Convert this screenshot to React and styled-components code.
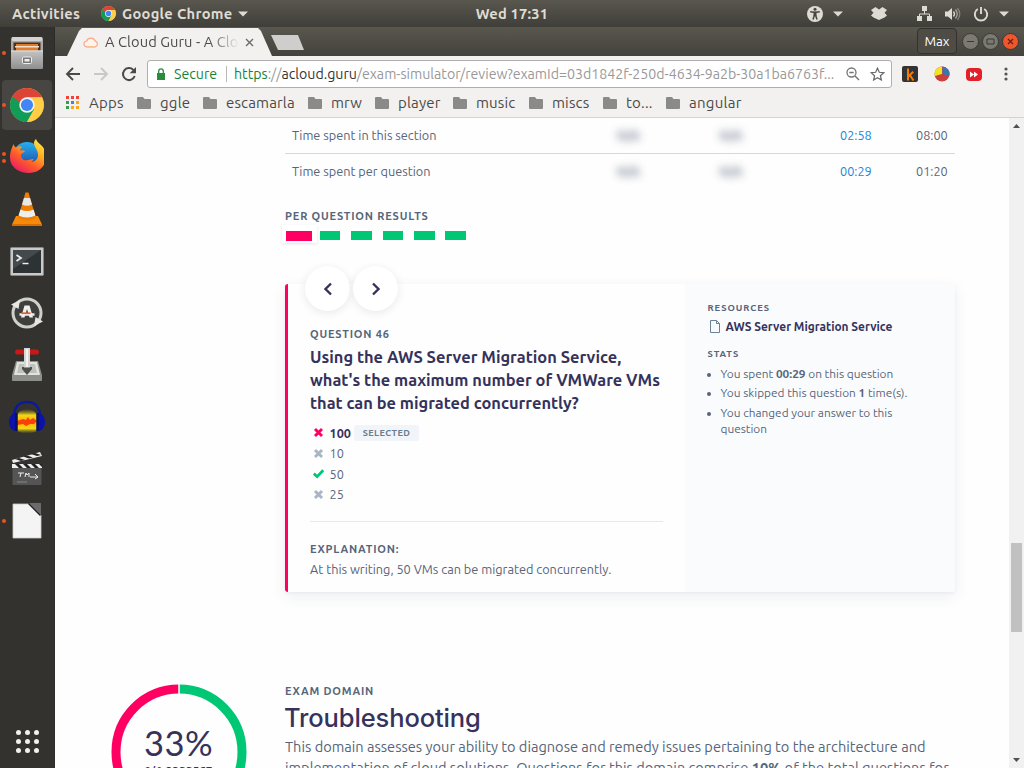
import React from 'react';
import styled, { createGlobalStyle, css } from 'styled-components';

const GlobalStyle = createGlobalStyle`
  * { box-sizing: border-box; }
  body { margin: 0; overflow: hidden; font-family: "Ubuntu", "Noto Sans", "Open Sans", sans-serif; }
  svg { display: block; flex: none; }
`;

const pink = '#ff0062';
const green = '#00c774';
const navy = '#35325c';
const slate = '#56657a';

const Screen = styled.div`
  width: 1024px; height: 768px; overflow: hidden;
  display: grid; grid-template: 27px 741px / 55px 969px;
`;

/* ---------- system bar ---------- */
const SystemBar = styled.header`
  grid-column: 1 / -1;
  display: grid; grid-template-columns: 440px 144px 1fr; align-items: center;
  background: linear-gradient(#59574e, #3f3e39);
  color: #dfdbd2; font-size: 14.67px; font-weight: 700; line-height: 27px;
`;
const SystemLeft = styled.div`display: flex; align-items: center; padding-left: 12px; height: 27px;`;
const Activities = styled.span`width: 89px; letter-spacing: 0.3px;`;
const AppName = styled.span`margin: 0 6px 0 6px; letter-spacing: 0.3px; white-space: nowrap;`;
const Clock = styled.span`text-align: center; letter-spacing: 0.2px; margin-top: -1px;`;
const Tray = styled.div`display: flex; align-items: center; justify-content: flex-end; padding-right: 15px; height: 27px;`;
const TrayIcon = styled.span`margin-left: ${p => p.$gap}px;`;

/* ---------- dock ---------- */
const Dock = styled.nav`
  background: #33322e; display: flex; flex-direction: column;
  border-right: 1px solid #2c2b28;
`;
const DockSlot = styled.div`
  height: 52px; padding: 1px 2px 1px 2px; display: flex;
`;
const DockTile = styled.div`
  width: 50px; height: 50px; border-radius: 4px; display: flex; align-items: center;
  background: ${p => (p.$active ? '#474642' : 'transparent')};
`;
const Dots = styled.div`
  width: 8px; display: flex; flex-direction: column; gap: 3px; align-items: flex-start;
`;
const Dot = styled.i`width: 4px; height: 4px; border-radius: 50%; background: #e95420;`;
const DockIcon = styled.span`width: 34px; display: flex; justify-content: center;`;
const AppsGrid = styled.div`
  margin: auto 0 14px 15.5px; width: 24px; height: 26px;
  display: grid; grid-template-columns: repeat(3, 5px); gap: 4px; align-content: center;
`;
const AppsDot = styled.i`width: 5px; height: 5px; border-radius: 50%; background: #f2f1ef;`;

/* ---------- browser chrome ---------- */
const Browser = styled.div`display: flex; flex-direction: column; min-width: 0; background: #f2f1f0;`;
const TabStrip = styled.div`
  height: 29px; display: flex; align-items: flex-start; padding: 1px 5px 0 12px;
  background: linear-gradient(#59574e, #43423c);
`;
const Tab = styled.div`
  width: 205px; height: 28px; padding: 0 0 0 16px; display: flex; align-items: center;
  background: #f2f1f0; clip-path: polygon(0 100%, 12px 3px, 15px 0, 191px 0, 194px 3px, 205px 100%);
`;
const TabTitle = styled.span`
  margin-left: 6px; width: 135px; overflow: hidden; white-space: nowrap;
  font-size: 14.67px; line-height: 26px; letter-spacing: 0.08px; color: #4c4b49;
  mask-image: linear-gradient(90deg, #000 104px, transparent 134px);
`;
const TabClose = styled.span`margin-left: 5px;`;
const NewTab = styled.div`
  width: 33px; height: 15px; margin: 7px auto 0 -1px; background: #cfcecc;
  clip-path: polygon(0 0, 27px 0, 33px 100%, 7px 100%);
`;
const UserBadge = styled.div`
  width: 40px; height: 26px; border: 1px solid #33322e; border-radius: 4px; margin-right: 2px;
  background: #4e4c45; color: #fff; font-size: 13.3px; line-height: 26px; text-align: center;
`;
const WinButton = styled.span`
  width: 17px; height: 17px; border-radius: 50%; margin: 5px 0 0 3px;
  border: 1px solid #3a3934; display: flex; align-items: center; justify-content: center;
  background: ${p => (p.$close ? '#f1552b' : '#7b7972')};
`;
const NavBar = styled.div`height: 34px; display: flex; align-items: center; padding: 2px 0 0 10px;`;
const NavIcon = styled.span`width: 28px;`;
const Omnibox = styled.div`
  width: 745px; height: 28px; margin-right: 10px; margin-left: -2px; padding-left: 8px;
  border: 1px solid #b0afad; border-radius: 3px; background: #fff;
  display: flex; align-items: center; font-size: 14.17px; white-space: nowrap;
`;
const Secure = styled.span`margin-left: 8px; width: 52px; color: #178239;`;
const Divider = styled.i`width: 1px; height: 16px; background: #b9b9b9; margin-right: 7px;`;
const Url = styled.span`width: 612px; color: #999;`;
const Scheme = styled.span`color: #178239;`;
const Host = styled.span`color: #333;`;
const OmniIcon = styled.span`width: 24px;`;
const Extension = styled.span`width: ${p => p.$w}px;`;
const Bookmarks = styled.div`
  height: 28px; padding: 0 0 2px 11px; display: flex; align-items: center;
  border-bottom: 1px solid #d5d3d1; color: #4b4a48; font-size: 15px; line-height: 24px;
`;
const Bookmark = styled.span`
  width: ${p => p.$w}px; display: flex; align-items: center; gap: ${p => p.$gap || 9}px; white-space: nowrap;
  letter-spacing: ${p => p.$ls || 0.15}px;
`;

/* ---------- page ---------- */
const Viewport = styled.div`flex: 1; min-height: 0; display: flex; background: #fefefe;`;
const Page = styled.main`width: 954px; height: 650px; overflow: hidden; color: ${slate};`;
const Section = styled.section`margin-left: 230px; width: 670px;`;
const TableRow = styled.div`
  height: 36px; padding: 0 7px 1px; display: grid; align-items: center;
  grid-template-columns: 325px 102.5px 120.5px 76px 1fr;
  border-bottom: 1px solid ${p => (p.$last ? 'transparent' : '#d6d9dc')};
  font-size: 12.7px; white-space: nowrap;
`;
const RowLabel = styled.span`color: ${slate};`;
const Hidden = styled.span`filter: blur(4px); font-weight: 700; opacity: 0.8;`;
const Time = styled.span`color: ${p => (p.$own ? '#1a84dc' : slate)};`;
const Caption = styled.h3`
  margin: 0; font-size: 11px; line-height: 16px; font-weight: 700; letter-spacing: 0.81px; color: ${slate};
  white-space: nowrap;
`;
const ResultsCaption = styled(Caption)`margin-top: 18px;`;
const Results = styled.div`display: flex; align-items: flex-start; height: 16px; margin: 2px 0 42px -3.2px;`;
const CurrentResult = styled.div`
  width: 35px; height: 18px; margin-top: -1px; padding: 6px 4.5px 0;
  background: #fff; box-shadow: 0 1px 3px rgba(53, 50, 92, 0.12);
`;
const ResultBar = styled.div`
  width: ${p => (p.$current ? 26 : 20.6)}px; height: ${p => (p.$current ? 10 : 9)}px;
  margin: ${p => (p.$current ? 0 : '5px 0 0 10.8px')};
  background: ${p => (p.$wrong ? pink : green)};
  &:nth-child(2) { margin-left: 3px; }
`;
const Card = styled.article`
  height: 308px; display: grid; grid-template-columns: 400px 270px; border-radius: 3px;
  box-shadow: 0 5px 15px rgba(53, 60, 100, 0.08), 0 1px 3px rgba(53, 60, 100, 0.06);
`;
const Question = styled.div`
  background: #fefefe; border-left: 3px solid ${pink}; border-radius: 3px 0 0 3px; padding: 0 22px;
`;
const Pager = styled.div`display: flex; gap: 3px; margin: -18px 0 15px -5px;`;
const PagerButton = styled.div`
  width: 45px; height: 45px; border-radius: 50%; background: #fff;
  box-shadow: 0 2px 8px rgba(53, 50, 92, 0.1);
  display: flex; align-items: center; justify-content: center;
`;
const Prompt = styled.h2`margin: 4px 0 7.5px; font-size: 16.42px; line-height: 23px; font-weight: 700; color: ${navy};`;
const Line = styled.span`display: block; white-space: nowrap;`;
const Answer = styled.div`
  height: 20.5px; display: flex; align-items: center; padding-left: 3px; font-size: 12.7px;
  ${p => p.$selected && css`font-weight: 700; color: ${navy};`}
`;
const AnswerText = styled.span`margin-left: 5.5px;`;
const Tag = styled.span`
  width: 65px; height: 16px; margin: 1px 0 0 3px; border-radius: 2px; background: #f1f5f9; color: #6a7c92;
  font-size: 9.1px; line-height: 16px; letter-spacing: 0.4px; text-align: center;
`;
const Rule = styled.hr`margin: 16.5px 0 19px; width: 353px; border: 0; height: 1px; background: #e6e8ea;`;
const Explanation = styled.p`margin: 3px 0 0; font-size: 12.73px; line-height: 18px; white-space: nowrap;`;

const Aside = styled.aside`background: #fafbfd; border-radius: 0 3px 3px 0; padding: 17px 22px 0 22.5px;`;
const SmallCaption = styled.h4`margin: 0; font-size: 9.4px; line-height: 14px; font-weight: 700; letter-spacing: 0.95px;`;
const ResourceLink = styled.div`
  display: flex; align-items: center; height: 18px; margin: 2px 0 12px; padding-left: 2px; gap: 6px;
  font-size: 11.9px; font-weight: 700; color: ${navy}; white-space: nowrap;
`;
const Stats = styled.ul`margin: 5px 0 0; padding: 0; list-style: none; font-size: 11.83px; line-height: 16px;`;
const Stat = styled.li`
  display: flex; align-items: flex-start; gap: 9.5px; margin-bottom: 3.4px; white-space: nowrap;
  &::before { content: ""; width: 4px; height: 4px; margin: 7px 0 0 -.5px; border-radius: 50%; background: ${slate}; flex: none; }
`;

const Domain = styled.section`display: flex; margin-top: 91px;`;
const Score = styled.div`
  width: 136px; height: 136px; margin: 1px 38px 0 56px; display: grid; grid-template: 136px / 136px;
`;
const Ring = styled.svg`grid-area: 1 / 1;`;
const ScoreText = styled.div`grid-area: 1 / 1; display: flex; flex-direction: column; align-items: center; padding-top: 39px; color: ${navy};`;
const Percent = styled.span`font-family: Lato, sans-serif; font-size: 34.5px; line-height: 40px; letter-spacing: 0.5px; margin-left: -1px;`;
const Correct = styled.span`font-size: 9.3px; line-height: 12px; font-weight: 700; letter-spacing: 0.75px; margin-top: 1px;`;
const DomainBody = styled.div`width: 680px;`;
const DomainTitle = styled.h1`
  margin: 3px 0 3px -1px; font-family: Inter, sans-serif; font-size: 25.5px; line-height: 31px; font-weight: 500;
  letter-spacing: -0.13px; color: ${navy};
`;
const Blurb = styled.p`margin: 0; font-size: 14.58px; line-height: 21px;`;

const ScrollBar = styled.div`
  width: 15px; height: 650px; background: #f1f1f1; display: flex; flex-direction: column; align-items: center;
  padding: 6px 0 6px;
`;
const Thumb = styled.div`width: 11px; height: 89px; margin: 415px 0 auto; background: #c1c1c1;`;

/* ---------- drawings ---------- */
const ChromeLogo = ({ size }) => (
  <svg width={size} height={size} viewBox="0 0 34 34">
    <circle cx="17" cy="17" r="17" fill="#e2b93a" />
    <path d="M17 17 2.3 8.5A17 17 0 0 0 17 34l7.4-12.8z" fill="#0f9d58" />
    <path d="M2.3 8.5A17 17 0 0 1 31.7 8.5L32 9.3H17L9.6 21.2z" fill="#db4437" />
    <path d="M17 9.3h15A17 17 0 0 1 17 34l7-12.8z" fill="#ffcd46" />
    <path d="M2.3 8.5 9.8 21.5 14 18z" fill="#0f9d58" />
    <circle cx="17" cy="17" r="7.7" fill="#f4f4f4" />
    <circle cx="17" cy="17" r="6.1" fill="#4285f4" />
  </svg>
);
const Caret = () => (
  <svg width="10" height="6" viewBox="0 0 10 6"><path d="M0 .5h10L5 5.5z" fill="#dfdbd2" /></svg>
);
const FilesIcon = () => (
  <svg width="34" height="34" viewBox="0 0 34 34">
    <defs><linearGradient id="fs" x2="0" y2="1"><stop stopColor="#c4c4c4" /><stop offset="1" stopColor="#8f8f8f" /></linearGradient></defs>
    <rect x="1" y="1" width="32" height="32" rx="2" fill="#a9a9a9" />
    <rect x="2" y="1" width="30" height="4" rx="1" fill="#d4d4d4" />
    <rect x="3.500" y="6.500" width="27" height="10" fill="#4a2f1d" />
    <path d="M6 8h22v7H6z" fill="#e07b2d" /><path d="M5 10h24v1.500H5z" fill="#f3e2cb" />
    <path d="M1 14.500h32V31a2 2 0 0 1-2 2H3a2 2 0 0 1-2-2z" fill="url(#fs)" />
    <path d="M1 15h32" stroke="#ddd" />
    <rect x="12.500" y="21" width="9" height="6.500" rx="1" fill="#777" stroke="#eee" /><rect x="14.500" y="23" width="5" height="2.500" fill="#eee" />
  </svg>
);
const FirefoxIcon = () => (
  <svg width="34" height="36" viewBox="0 0 34 36">
    <defs>
      <linearGradient id="ff" x1=".9" y1="0" x2=".2" y2="1"><stop stopColor="#fff14a" /><stop offset=".35" stopColor="#ffb021" /><stop offset=".65" stopColor="#ff5a2b" /><stop offset="1" stopColor="#e8166b" /></linearGradient>
      <linearGradient id="fb" x2="0" y2="1"><stop stopColor="#25b0f0" /><stop offset="1" stopColor="#203a9c" /></linearGradient>
    </defs>
    <circle cx="17" cy="17" r="14" fill="url(#fb)" />
    <path d="M3.500 5C4 7 5 8 6 8.500 8 7 11 7 12 8c-1 1-2 2-2 3 1 1 4 0 5 1-1 2-4 2-4 4 0 4 3 6 7 5 2 0 3-1 5-1 1 0 0 2-2 3 4 0 7-3 7-7 0-5-4-8-4-12 0-2 1-3 2-4 1 3 3 4 5 6 4 4 5 7 5 12 0 9-7 16-17 16S0 28 0 19C0 12 2 9 3.500 5z" fill="url(#ff)" />
  </svg>
);
const VlcIcon = () => (
  <svg width="32" height="36" viewBox="0 0 32 36">
    <path d="M5 25h22l4 8.500q0 1-1 1H2q-1 0-1-1z" fill="#f58a0b" />
    <path d="M1 33h30v2H1z" fill="#d86c00" />
    <path d="M14.500 1.500h3L25 27q-9 5-18 0z" fill="#f07c00" />
    <path d="m13 7 6 0 2 6.500q-5 2.500-10 0z" fill="#e8e8e8" /><path d="m9.500 18.500q6.500 3 13 0l2 6q-8.500 4-17 0z" fill="#eee" />
  </svg>
);
const TerminalIcon = () => (
  <svg width="34" height="32" viewBox="0 0 34 32">
    <rect x=".5" y="2.500" width="33" height="28" rx="1" fill="#c9c9c9" stroke="#888" />
    <rect x="3" y="5" width="28" height="23" fill="#2d3234" /><path d="M3 5h28L3 24z" fill="#444a4c" />
    <path d="m6.500 10 4.500 3-4.500 3M12.500 18.500h6" fill="none" stroke="#eee" strokeWidth="1.700" />
  </svg>
);
const UpdaterIcon = () => (
  <svg width="34" height="34" viewBox="0 0 34 34">
    <circle cx="17" cy="17" r="14" fill="#3f3f3d" stroke="#cfcfcb" strokeWidth="3" />
    <path d="M1 8.500 10 4 8.500 13zM33 25.500 24 30l1.500-9z" fill="#e6e6e2" />
    <path d="M14.500 9.500h5l3.500 12h-3.500l-2.500-8.500-2.500 8.500H11z" fill="#f0f0ee" /><path d="M9.500 18.500h15" stroke="#f0f0ee" strokeWidth="2.500" /><path d="M11.500 17.200h9" stroke="#e8622c" strokeWidth="1.700" />
  </svg>
);
const InstallerIcon = () => (
  <svg width="32" height="34" viewBox="0 0 32 34">
    <path d="M5 13h22l4 14v5a1 1 0 0 1-1 1H2a1 1 0 0 1-1-1v-5z" fill="#8d8f8a" />
    <path d="M6 14h20l3 13H3z" fill="#e1e3de" /><path d="M8 16h16l2 9H6z" fill="#bfc1bc" />
    <rect x="4" y="1.500" width="24" height="5" rx="2.500" fill="#cc1717" />
    <path d="M11 19h10v2l-5 6-5-6z" fill="#4e504c" /><path d="M13 0h6v19.500h-6z" fill="#d5d6d3" /><path d="M16 1v18" stroke="#f3f3f2" strokeWidth="2" />
  </svg>
);
const AudacityIcon = () => (
  <svg width="36" height="34" viewBox="0 0 36 34">
    <defs>
      <linearGradient id="au" x2="0" y2="1"><stop stopColor="#b59a10" stopOpacity="0" /><stop offset=".25" stopColor="#f0d818" /><stop offset=".5" stopColor="#ffae00" /><stop offset=".8" stopColor="#f0d818" /><stop offset="1" stopColor="#b59a10" stopOpacity="0" /></linearGradient>
    </defs>
    <path d="M8 14q10-10 20 0v17q-10 5-20 0z" fill="url(#au)" />
    <path d="M8 21l3-1 3-1 3 1 2-3 2 3 3-2 4 3-3 3-4 0-4 2-3-2-6 1z" fill="#fb3f08" />
    <path d="M5 17C5 7 10 2 18 2s13 5 13 15" fill="none" stroke="#0b1a9c" strokeWidth="2.600" />
    <path d="M7 13v18C3 31 0 27 0 22s3-9 7-9zM29 13v18c4 0 7-4 7-9s-3-9-7-9z" fill="#0a12a8" /><path d="M7.500 13v18M28.500 13v18" stroke="#06105c" strokeWidth="2.500" />
  </svg>
);
const ClapperIcon = () => (
  <svg width="32" height="36" viewBox="0 0 32 36">
    <rect x="1.500" y="16" width="29" height="18" rx="1" fill="#555" />
    <path d="M1 13h30v4H1z" fill="#eee" /><path d="m4 13 4 4h4l-4-4zM12 13l4 4h4l-4-4zM20 13l4 4h4l-4-4zM28 13l3 3v-3z" fill="#222" />
    <path d="M1 9 29 1l2 4L2 12z" fill="#eee" /><path d="m4 8 6 2 4-1-6-2zM12 5.500l6 2 4-1-6-2zM20 3l6 2 4-1-6-2z" fill="#222" />
    <path d="M7 22h6M10 22l-1 4M14 26l1-4 1 2 2-2v4M19 26h8M24 23l3 3-3 2" stroke="#eee" fill="none" /><path d="M6 31h10" stroke="#888" />
  </svg>
);
const DocIcon = () => (
  <svg width="30" height="36" viewBox="0 0 30 36">
    <path d="M1 1h17l11 11v23H1z" fill="#f4f4f4" stroke="#ccc" strokeWidth=".8" /><path d="M17 0h12v12z" fill="#6b6b6b" /><path d="M16.500 .5 28.500 12.500" stroke="#222" strokeWidth="1.500" />
  </svg>
);
const Folder = () => (
  <svg width="14" height="12" viewBox="0 0 14 12"><path d="M1 0h5l1.500 2H13a1 1 0 0 1 1 1v8a1 1 0 0 1-1 1H1a1 1 0 0 1-1-1V1a1 1 0 0 1 1-1z" fill="#8a8a88" /></svg>
);
const AppsTiles = () => (
  <svg width="13" height="13" viewBox="0 0 13 13">
    <path d="M0 0h3v3H0zM5 0h3v3H5zM10 0h3v3h-3z" fill="#f2403a" /><path d="M0 5h3v3H0zM0 10h3v3H0z" fill="#3c9a4a" />
    <path d="M5 5h3v3H5z" fill="#3f83f0" /><path d="M10 5h3v3h-3zM5 10h3v3H5zM10 10h3v3h-3z" fill="#f7a81b" />
  </svg>
);
const Cross = ({ color }) => (
  <svg width="11" height="11" viewBox="0 0 11 11"><path d="m2 2 7 7M9 2 2 9" stroke={color} strokeWidth="2.900" fill="none" /></svg>
);
const Check = () => (
  <svg width="11" height="11" viewBox="0 0 11 11"><path d="M.8 5.600 4.100 8.600 10.200 2.300" stroke={green} strokeWidth="2.700" fill="none" /></svg>
);

const dockItems = [
  { icon: <FilesIcon />, dots: 1 },
  { icon: <ChromeLogo size={34} />, dots: 1, active: true },
  { icon: <FirefoxIcon />, dots: 2 },
  { icon: <VlcIcon />, dots: 0 },
  { icon: <TerminalIcon />, dots: 0 },
  { icon: <UpdaterIcon />, dots: 0 },
  { icon: <InstallerIcon />, dots: 0 },
  { icon: <AudacityIcon />, dots: 0 },
  { icon: <ClapperIcon />, dots: 0 },
  { icon: <DocIcon />, dots: 1 },
];

const bookmarks = [
  ['ggle', 66, 0.2], ['escamarla', 105, 0.15], ['mrw', 67, 0.1], ['player', 78], ['music', 76], ['miscs', 74], ['to...', 63, 0.2], ['angular', 80, 0.25],
];

export default function App() {
  return (
    <Screen>
      <GlobalStyle />
      <SystemBar>
        <SystemLeft>
          <Activities>Activities</Activities>
          <ChromeLogo size={15} />
          <AppName>Google Chrome</AppName>
          <Caret />
        </SystemLeft>
        <Clock>Wed 17:31</Clock>
        <Tray>
          <TrayIcon $gap={0}>
            <svg width="16" height="16" viewBox="0 0 16 16"><circle cx="8" cy="8" r="8" fill="#dfdbd2" /><circle cx="8" cy="3.200" r="1.500" fill="#46453f" /><path d="M3.200 5.800 7 6.300h2l3.800-.5M6 13.500 7.300 9.500h1.400L10 13.500" stroke="#46453f" strokeWidth="1.500" fill="none" /><path d="M6.500 5.800h3v4h-3z" fill="#46453f" /></svg>
          </TrayIcon>
          <TrayIcon $gap={10}><Caret /></TrayIcon>
          <TrayIcon $gap={28}>
            <svg width="16" height="13" viewBox="0 0 16 13"><path d="M4.500 0 8 2.500 11.500 0 16 3l-2.500 2.800L16 8.500l-2.500 2L8 13l-5.500-2.500L0 8.500l2.500-2.700L0 3z" fill="#dfdbd2" /></svg>
          </TrayIcon>
          <TrayIcon $gap={30}>
            <svg width="15" height="15" viewBox="0 0 15 15"><path d="M5 0h5v5H5zM0 10h5v5H0zM10 10h5v5h-5z" fill="#dfdbd2" /><path d="M7.500 5v3M2.500 10V8h10v2" fill="none" stroke="#dfdbd2" /></svg>
          </TrayIcon>
          <TrayIcon $gap={13}>
            <svg width="16" height="14" viewBox="0 0 16 14"><path d="M0 4.500h3L7 1v12L3 9.500H0z" fill="#dfdbd2" /><path d="M8.500 4.500q2 2.500 0 5" stroke="#dfdbd2" fill="none" strokeWidth="1.300" /><path d="M10.500 2.500q3.500 4.500 0 9" stroke="#aaa79f" fill="none" strokeWidth="1.300" /><path d="M12.500 1q4.500 6 0 12" stroke="#85837b" fill="none" strokeWidth="1.300" /></svg>
          </TrayIcon>
          <TrayIcon $gap={12}>
            <svg width="16" height="16" viewBox="0 0 16 16"><path d="M4.800 3A6.200 6.200 0 1 0 11.200 3M8 1v7" fill="none" stroke="#dfdbd2" strokeWidth="1.900" /></svg>
          </TrayIcon>
          <TrayIcon $gap={10}><Caret /></TrayIcon>
        </Tray>
      </SystemBar>

      <Dock>
        {dockItems.map((item, i) => (
          <DockSlot key={i}>
            <DockTile $active={item.active}>
              <Dots>{Array.from({ length: item.dots }, (_, d) => <Dot key={d} />)}</Dots>
              <DockIcon>{item.icon}</DockIcon>
            </DockTile>
          </DockSlot>
        ))}
        <AppsGrid>{Array.from({ length: 9 }, (_, i) => <AppsDot key={i} />)}</AppsGrid>
      </Dock>

      <Browser>
        <TabStrip>
          <Tab>
            <svg width="16" height="11" viewBox="0 0 16 11"><path d="M4 9.800A2.900 2.900 0 0 1 3.700 4 4.600 4.600 0 0 1 12.300 4.200 2.900 2.900 0 0 1 12.200 9.800z" fill="#fff3ea" stroke="#f8a887" strokeWidth="1.200" /><path d="M4 9.900h8.200" stroke="#fbc38f" strokeWidth="1.300" /></svg>
            <TabTitle>A Cloud Guru - A Clo</TabTitle>
            <TabClose><svg width="9" height="9" viewBox="0 0 9 9"><path d="m1 1 7 7M8 1 1 8" stroke="#6b6a68" strokeWidth="1.400" /></svg></TabClose>
          </Tab>
          <NewTab />
          <UserBadge>Max</UserBadge>
          <WinButton><svg width="9" height="9" viewBox="0 0 9 9"><path d="M1 4.500h7" stroke="#3a3934" /></svg></WinButton>
          <WinButton><svg width="9" height="9" viewBox="0 0 9 9"><path d="M1 2h7v5H1z" stroke="#3a3934" fill="none" /></svg></WinButton>
          <WinButton $close><svg width="9" height="9" viewBox="0 0 9 9"><path d="m2 2 5 5M7 2 2 7" stroke="#5a2413" strokeWidth="1.200" /></svg></WinButton>
        </TabStrip>

        <NavBar>
          <NavIcon><svg width="16" height="14" viewBox="0 0 16 14"><path d="M15 7H2M8 1 2 7l6 6" fill="none" stroke="#4a4a4a" strokeWidth="1.900" /></svg></NavIcon>
          <NavIcon><svg width="16" height="14" viewBox="0 0 16 14"><path d="M1 7h13M8 1l6 6-6 6" fill="none" stroke="#c9c8c6" strokeWidth="1.900" /></svg></NavIcon>
          <NavIcon><svg width="16" height="16" viewBox="0 0 16 16"><path d="M13.700 10A6 6 0 1 1 12.200 3.800L13.500 5" fill="none" stroke="#4a4a4a" strokeWidth="2" /><path d="M15 1v6.300H8.700z" fill="#4a4a4a" /></svg></NavIcon>
          <Omnibox>
            <svg width="10" height="13" viewBox="0 0 10 13"><rect x="1" y="5" width="8" height="7" fill="#2a8c3c" /><path d="M2.700 5V3.200a2.300 2.300 0 0 1 4.600 0V5" fill="none" stroke="#2a8c3c" strokeWidth="1.300" /></svg>
            <Secure>Secure</Secure>
            <Divider />
            <Url><Scheme>https</Scheme>://<Host>acloud.guru</Host>/exam-simulator/review?examId=03d1842f-250d-4634-9a2b-30a1ba6763f...</Url>
            <OmniIcon><svg width="14" height="14" viewBox="0 0 14 14"><circle cx="5.500" cy="5.500" r="4.500" fill="none" stroke="#757575" strokeWidth="1.300" /><path d="M3.300 5.500h4.400M9 9l4 4" stroke="#757575" strokeWidth="1.500" /></svg></OmniIcon>
            <svg width="15" height="14" viewBox="0 0 15 14"><path d="m7.500 1.200 1.800 4.100 4.500.4-3.400 3 1 4.300-3.900-2.300L3.600 13l1-4.300-3.400-3 4.500-.4z" fill="none" stroke="#666" strokeWidth="1.200" /></svg>
          </Omnibox>
          <Extension $w={32}><svg width="16" height="16" viewBox="0 0 16 16"><rect width="16" height="16" rx="2" fill="#333" /><path d="M6 2.500v12M11.200 5.800 6.500 10.300M7.800 9l3.700 5.500" stroke="#f57c00" strokeWidth="2" fill="none" /></svg></Extension>
          <Extension $w={32}><svg width="16" height="16" viewBox="0 0 16 16"><circle cx="8" cy="8" r="7.500" fill="#c9403c" /><path d="M8.500 8V.5A7.500 7.500 0 0 1 15.300 10z" fill="#3c76ae" /><path d="M8 8V.5A7.500 7.500 0 0 0 .8 10z" fill="#f3e51c" /></svg></Extension>
          <Extension $w={38}><svg width="16" height="13" viewBox="0 0 16 13"><rect width="16" height="13" rx="4" fill="#e3202a" /><path d="m4 3.500 4 3-4 3zM8 3.500l4 3-4 3z" fill="#fff" /></svg></Extension>
          <svg width="4" height="14" viewBox="0 0 4 14"><circle cx="2" cy="2" r="1.600" fill="#555" /><circle cx="2" cy="7" r="1.600" fill="#555" /><circle cx="2" cy="12" r="1.600" fill="#555" /></svg>
        </NavBar>

        <Bookmarks>
          <Bookmark $w={71} $ls={0.2} $gap={10}><AppsTiles />Apps</Bookmark>
          {bookmarks.map(([name, w, ls]) => (
            <Bookmark key={name} $w={w} $ls={ls}><Folder />{name}</Bookmark>
          ))}
        </Bookmarks>

        <Viewport>
          <Page>
            <Section>
              <TableRow>
                <RowLabel>Time spent in this section</RowLabel>
                <Hidden>N/A</Hidden><Hidden>N/A</Hidden>
                <Time $own>02:58</Time><Time>08:00</Time>
              </TableRow>
              <TableRow $last>
                <RowLabel>Time spent per question</RowLabel>
                <Hidden>N/A</Hidden><Hidden>N/A</Hidden>
                <Time $own>00:29</Time><Time>01:20</Time>
              </TableRow>

              <ResultsCaption>PER QUESTION RESULTS</ResultsCaption>
              <Results>
                <CurrentResult><ResultBar $current $wrong /></CurrentResult>
                <ResultBar /><ResultBar /><ResultBar /><ResultBar /><ResultBar />
              </Results>
            </Section>

            <Section>
              <Card>
                <Question>
                  <Pager>
                    <PagerButton><svg width="10" height="14" viewBox="0 0 10 14"><path d="M8 1.500 2.500 7 8 12.500" fill="none" stroke={navy} strokeWidth="2.400" /></svg></PagerButton>
                    <PagerButton><svg width="10" height="14" viewBox="0 0 10 14"><path d="M2 1.500 7.500 7 2 12.500" fill="none" stroke={navy} strokeWidth="2.400" /></svg></PagerButton>
                  </Pager>
                  <Caption>QUESTION 46</Caption>
                  <Prompt>
                    <Line>Using the AWS Server Migration Service,</Line>
                    <Line>what's the maximum number of VMWare VMs</Line>
                    <Line>that can be migrated concurrently?</Line>
                  </Prompt>
                  <Answer $selected><Cross color={pink} /><AnswerText>100</AnswerText><Tag>SELECTED</Tag></Answer>
                  <Answer><Cross color="#a9b5c2" /><AnswerText>10</AnswerText></Answer>
                  <Answer><Check /><AnswerText>50</AnswerText></Answer>
                  <Answer><Cross color="#a9b5c2" /><AnswerText>25</AnswerText></Answer>
                  <Rule />
                  <Caption>EXPLANATION:</Caption>
                  <Explanation>At this writing, 50 VMs can be migrated concurrently.</Explanation>
                </Question>
                <Aside>
                  <SmallCaption>RESOURCES</SmallCaption>
                  <ResourceLink>
                    <svg width="10" height="13" viewBox="0 0 10 13"><path d="M.5.5h6l3 3v9h-9zM6.500.5v3h3" fill="none" stroke="#6c8197" /></svg>
                    AWS Server Migration Service
                  </ResourceLink>
                  <SmallCaption>STATS</SmallCaption>
                  <Stats>
                    <Stat><span>You spent <b>00:29</b> on this question</span></Stat>
                    <Stat><span>You skipped this question <b>1</b> time(s).</span></Stat>
                    <Stat><span>You changed your answer to this<br />question</span></Stat>
                  </Stats>
                </Aside>
              </Card>
            </Section>

            <Domain>
              <Score>
                <Ring width="136" height="136" viewBox="0 0 136 136">
                  <path d="M68 5A63 63 0 0 1 68 131" fill="none" stroke={green} strokeWidth="9" />
                  <path d="M68 131A63 63 0 0 1 68 5" fill="none" stroke={pink} strokeWidth="9" />
                  <path d="M68 0v10" stroke="#fff" strokeWidth="1.500" />
                </Ring>
                <ScoreText>
                  <Percent>33%</Percent>
                  <Correct>2/6 CORRECT</Correct>
                </ScoreText>
              </Score>
              <DomainBody>
                <Caption>EXAM DOMAIN</Caption>
                <DomainTitle>Troubleshooting</DomainTitle>
                <Blurb>
                  <Line>This domain assesses your ability to diagnose and remedy issues pertaining to the architecture and</Line>
                  <Line>implementation of cloud solutions. Questions for this domain comprise <b>10%</b> of the total questions for</Line>
                </Blurb>
              </DomainBody>
            </Domain>
          </Page>
          <ScrollBar>
            <svg width="7" height="4" viewBox="0 0 7 4"><path d="M3.500 0 7 4H0z" fill="#505050" /></svg>
            <Thumb />
            <svg width="7" height="4" viewBox="0 0 7 4"><path d="M0 0h7L3.500 4z" fill="#505050" /></svg>
          </ScrollBar>
        </Viewport>
      </Browser>
    </Screen>
  );
}
